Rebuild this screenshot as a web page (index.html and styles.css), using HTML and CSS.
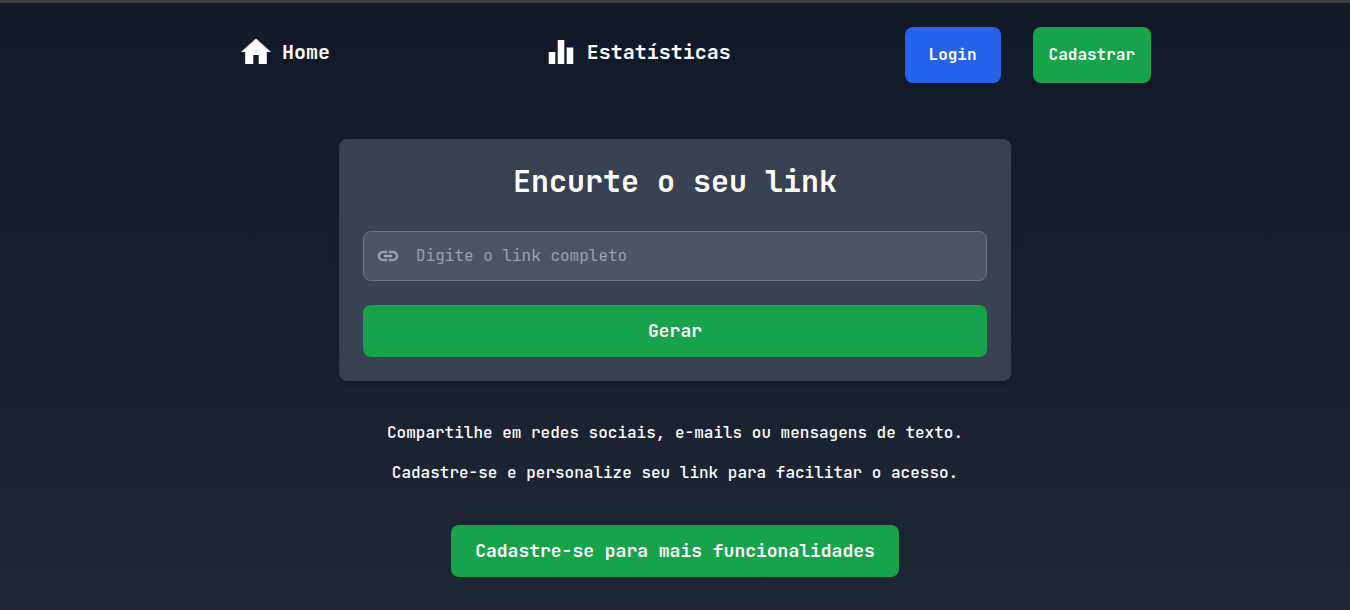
FILE: index.html
```html
<!DOCTYPE html>
<html lang="pt-BR">
<head>
  <meta charset="utf-8">
  <meta name="viewport" content="width=device-width, initial-scale=1">
  <title>Encurtador de links</title>
  <link rel="stylesheet" href="styles.css">
</head>
<body class="page">
  <header class="header">
    <nav class="nav">
      <a class="nav-link" href="#home">
        <svg class="nav-icon" viewBox="0 0 24 24" aria-hidden="true"><path d="M10.200 20v-6h3.600v6h5.400v-8h2.800L12 3 2 12h2.800v8z"/></svg>
        <span>Home</span>
      </a>
      <a class="nav-link" href="#estatisticas">
        <svg class="nav-icon" viewBox="0 0 24 24" aria-hidden="true"><path d="M3.800 12h4.400v8H3.800zM9.800 4h4.400v16H9.800zM15.800 9h4.400v11h-4.400z"/></svg>
        <span>Estatísticas</span>
      </a>
      <div class="nav-actions">
        <button class="button button-login" type="button">Login</button>
        <button class="button button-signup" type="button">Cadastrar</button>
      </div>
    </nav>
  </header>
  <main class="main">
    <form class="card">
      <h1 class="card-title"><label for="link">Encurte o seu link</label></h1>
      <div class="field">
        <svg class="field-icon" viewBox="0 0 24 24" aria-hidden="true"><path d="M3.900 12c0-1.710 1.390-3.100 3.100-3.100h4V7H7c-2.760 0-5 2.240-5 5s2.240 5 5 5h4v-1.900H7c-1.710 0-3.100-1.390-3.100-3.100zM8 13h8v-2H8v2zm9-6h-4v1.900h4c1.710 0 3.100 1.390 3.100 3.100s-1.390 3.100-3.100 3.100h-4V17h4c2.760 0 5-2.240 5-5s-2.240-5-5-5z"/></svg>
        <input class="field-input" id="link" type="text" placeholder="Digite o link completo">
      </div>
      <button class="button button-large" type="button">Gerar</button>
    </form>
    <div class="notes">
      <p class="note">Compartilhe em redes sociais, e-mails ou mensagens de texto.</p>
      <p class="note">Cadastre-se e personalize seu link para facilitar o acesso.</p>
    </div>
    <button class="button button-large" type="button">Cadastre-se para mais funcionalidades</button>
  </main>
</body>
</html>
```
FILE: styles.css
```css
* {
  box-sizing: border-box;
}

.page {
  margin: 0;
  min-height: 100vh;
  border-top: 3px solid #404040;
  background: linear-gradient(to bottom, #111827, #1e2735) border-box;
  color: #fff;
  font-family: "JetBrains Mono", "DejaVu Sans Mono", "Liberation Mono", monospace;
  font-size: 16px;
  line-height: 24px;
}

.header {
  padding: 24px 16px 0;
}

.nav {
  display: flex;
  align-items: flex-start;
  justify-content: space-between;
  max-width: 952px;
  margin: 0 auto;
}

.nav-link {
  display: flex;
  align-items: center;
  gap: 8px;
  margin-left: 39px;
  padding-top: 7px;
  color: inherit;
  font-size: 20px;
  font-weight: 700;
  line-height: 28px;
  text-decoration: none;
}

.nav-icon {
  width: 36px;
  height: 36px;
  fill: currentColor;
}

.nav-actions {
  display: flex;
  gap: 32px;
}

.button {
  padding: 16px;
  border: 0;
  border-radius: 8px;
  background: #16a34a;
  color: #fff;
  font: inherit;
  font-weight: 700;
  cursor: pointer;
}

.button-login {
  padding: 16px 24px;
  background: #2563eb;
}

.button-large {
  padding: 12px 24px;
  font-size: 18px;
  line-height: 28px;
}

.main {
  display: flex;
  flex-direction: column;
  align-items: center;
  gap: 40px;
  padding: 56px 16px 32px;
}

.card {
  display: flex;
  flex-direction: column;
  gap: 24px;
  width: 100%;
  max-width: 672px;
  padding: 24px;
  border-radius: 8px;
  background: #374151;
  box-shadow: 0 4px 8px rgba(0, 0, 0, 0.2);
}

.card-title {
  margin: 0 0 8px;
  font-size: 30px;
  font-weight: 700;
  line-height: 36px;
  text-align: center;
}

.field {
  display: flex;
  align-items: center;
  gap: 16px;
  padding: 12px;
  border: 1px solid #6b7280;
  border-radius: 8px;
  background: #4b5563;
}

.field-icon {
  flex: none;
  width: 24px;
  height: 24px;
  fill: #9ca3af;
  stroke: #9ca3af;
  stroke-width: 0.4;
}

.field-input {
  flex: 1;
  min-width: 0;
  height: 24px;
  padding: 0;
  border: 0;
  outline: 0;
  background: transparent;
  color: #fff;
  font: inherit;
}

.field-input::placeholder {
  color: #9ca3af;
  opacity: 1;
}

.notes {
  display: flex;
  flex-direction: column;
  gap: 16px;
  font-weight: 500;
  text-align: center;
}

.note {
  margin: 0;
}
```
